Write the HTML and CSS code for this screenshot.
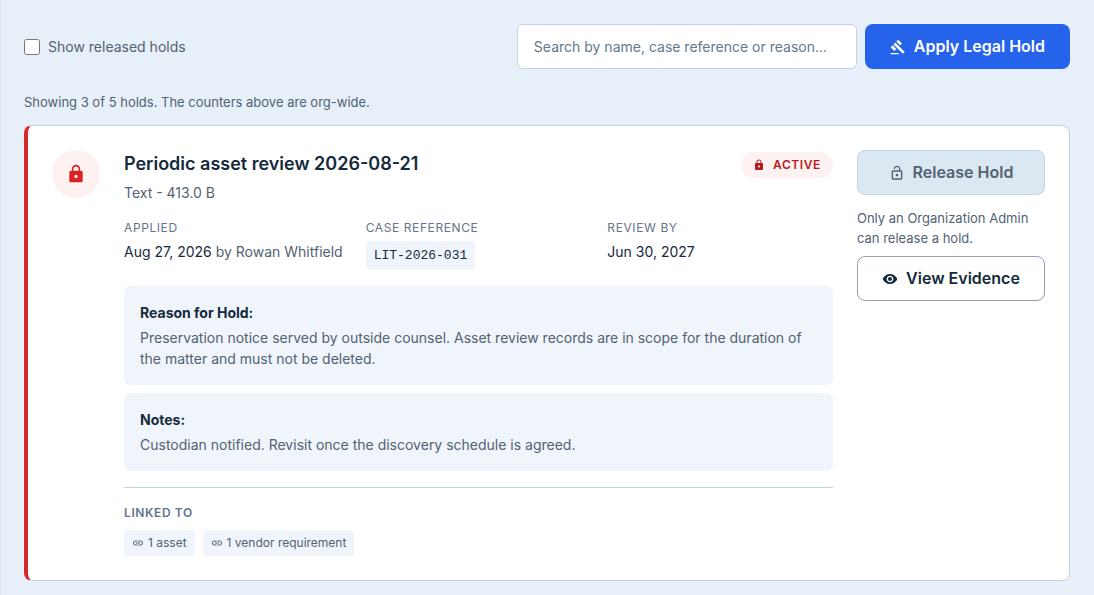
FILE: index.html
```html
<!DOCTYPE html>
<html lang="en">
<head>
<meta charset="utf-8">
<meta name="viewport" content="width=device-width, initial-scale=1">
<title>Legal holds</title>
<link rel="stylesheet" href="styles.css">
</head>
<body>
<svg class="sprite" aria-hidden="true">
  <symbol id="lock" viewBox="0 0 24 24"><path d="M18 8h-1V6c0-2.760-2.240-5-5-5S7 3.240 7 6v2H6c-1.100 0-2 .9-2 2v10c0 1.100.9 2 2 2h12c1.100 0 2-.9 2-2V10c0-1.100-.9-2-2-2zm-6 9c-1.100 0-2-.9-2-2s.9-2 2-2 2 .9 2 2-.9 2-2 2zm3.100-9H8.900V6c0-1.710 1.390-3.100 3.100-3.100s3.100 1.390 3.100 3.100v2z"/></symbol>
  <symbol id="lock-open" viewBox="0 0 24 24"><path d="M18 8h-1V6c0-2.760-2.240-5-5-5S7 3.240 7 6h1.900c0-1.710 1.390-3.100 3.100-3.100s3.100 1.390 3.100 3.100v2H6c-1.100 0-2 .9-2 2v10c0 1.100.9 2 2 2h12c1.100 0 2-.9 2-2V10c0-1.100-.9-2-2-2zm0 12H6V10h12v10zm-6-3c1.100 0 2-.9 2-2s-.9-2-2-2-2 .9-2 2 .9 2 2 2z"/></symbol>
  <symbol id="gavel" viewBox="0 0 24 24"><path d="M1 21h12v2H1zM5.245 8.070l2.830-2.827 14.140 14.142-2.828 2.828zM12.317 1l5.657 5.656-2.830 2.830-5.654-5.660zM3.825 9.485l5.657 5.657-2.828 2.828-5.657-5.657z"/></symbol>
  <symbol id="eye" viewBox="0 0 24 24"><path d="M12 4.500C7 4.500 2.730 7.610 1 12c1.730 4.390 6 7.500 11 7.500s9.270-3.110 11-7.500c-1.730-4.390-6-7.500-11-7.500zM12 17c-2.760 0-5-2.240-5-5s2.240-5 5-5 5 2.240 5 5-2.240 5-5 5zm0-8c-1.660 0-3 1.340-3 3s1.340 3 3 3 3-1.340 3-3-1.340-3-3-3z"/></symbol>
  <symbol id="link" viewBox="0 0 24 24"><path d="M3.900 12c0-1.710 1.390-3.100 3.100-3.100h4V7H7c-2.760 0-5 2.240-5 5s2.240 5 5 5h4v-1.900H7c-1.710 0-3.100-1.390-3.100-3.100zM8 13h8v-2H8v2zm9-6h-4v1.900h4c1.710 0 3.100 1.390 3.100 3.100s-1.390 3.100-3.100 3.100h-4V17h4c2.760 0 5-2.240 5-5s-2.240-5-5-5z"/></symbol>
</svg>
<main class="page">
  <header class="toolbar">
    <label class="toggle"><input type="checkbox" class="toggle-box">Show released holds</label>
    <div class="toolbar-actions">
      <input type="search" class="search" aria-label="Search holds" placeholder="Search by name, case reference or reason...">
      <button type="button" class="button button-primary"><svg class="icon" aria-hidden="true"><use href="#gavel"/></svg>Apply Legal Hold</button>
    </div>
  </header>
  <p class="summary">Showing 3 of 5 holds. The counters above are org-wide.</p>
  <article class="card">
    <div class="avatar"><svg class="icon-large" aria-hidden="true"><use href="#lock"/></svg></div>
    <div class="content">
      <div class="heading">
        <div>
          <h2 class="title">Periodic asset review 2026-08-21</h2>
          <p class="subtitle">Text - 413.0 B</p>
        </div>
        <span class="status"><svg class="icon-small" aria-hidden="true"><use href="#lock"/></svg>ACTIVE</span>
      </div>
      <dl class="facts">
        <div><dt class="term">APPLIED</dt><dd class="value">Aug 27, 2026 <span class="muted">by Rowan Whitfield</span></dd></div>
        <div><dt class="term">CASE REFERENCE</dt><dd class="value"><code class="reference">LIT-2026-031</code></dd></div>
        <div><dt class="term">REVIEW BY</dt><dd class="value">Jun 30, 2027</dd></div>
      </dl>
      <div class="notes">
        <section class="note">
          <h3 class="note-title">Reason for Hold:</h3>
          <p class="note-text">Preservation notice served by outside counsel. Asset review records are in scope for the duration of the matter and must not be deleted.</p>
        </section>
        <section class="note">
          <h3 class="note-title">Notes:</h3>
          <p class="note-text">Custodian notified. Revisit once the discovery schedule is agreed.</p>
        </section>
      </div>
      <section class="linked">
        <h3 class="linked-title">LINKED TO</h3>
        <div class="chips">
          <span class="chip"><svg class="icon-small" aria-hidden="true"><use href="#link"/></svg>1 asset</span>
          <span class="chip"><svg class="icon-small" aria-hidden="true"><use href="#link"/></svg>1 vendor requirement</span>
        </div>
      </section>
    </div>
    <aside class="actions">
      <button type="button" class="button button-disabled" disabled><svg class="icon" aria-hidden="true"><use href="#lock-open"/></svg>Release Hold</button>
      <p class="hint">Only an Organization Admin can release a hold.</p>
      <button type="button" class="button button-outline"><svg class="icon" aria-hidden="true"><use href="#eye"/></svg>View Evidence</button>
    </aside>
  </article>
</main>
</body>
</html>
```
FILE: styles.css
```css
* { box-sizing: border-box; }
body, h2, h3, p, dl, dd { margin: 0; }
body {
  background: #e7eff9;
  color: #152a3d;
  font: 14px/21px Inter, "Liberation Sans", sans-serif;
}
.sprite { display: none; }
svg { fill: currentColor; flex: none; }
.icon { width: 16px; height: 16px; }
.icon-large { width: 20px; height: 20px; }
.icon-small { width: 12px; height: 12px; }

.page { min-height: 100vh; padding: 24px 24px 14px 23px; border-left: 1px solid #dfe8f2; }
.toolbar { display: flex; align-items: center; justify-content: space-between; gap: 16px; }
.toggle { display: flex; align-items: center; gap: 8px; color: #526274; }
.toggle-box { width: 16px; height: 16px; margin: 0; }
.toolbar-actions { display: flex; gap: 8px; }
.search {
  width: 340px;
  padding: 0 16px;
  border: 1px solid #c3d4e5;
  border-radius: 6px;
  background: #fff;
  color: inherit;
  font: inherit;
  appearance: none;
}
.search::placeholder { color: #64788c; }
.button {
  display: flex;
  align-items: center;
  justify-content: center;
  gap: 8px;
  padding: 10px 24px;
  border: 1px solid transparent;
  border-radius: 8px;
  font: 600 16px/23px Inter, "Liberation Sans", sans-serif;
}
.button-primary { background: #2563eb; color: #fff; }
.button-disabled { background: #dbe7f1; border-color: #c3d4e5; color: #526274; }
.button-outline { background: #fff; border-color: #94a0b0; color: #152a3d; }

.summary { margin: 23px 0 13px; color: #526274; font-size: 13px; line-height: 20px; }
.card {
  display: grid;
  grid-template-columns: 48px minmax(0, 1fr) 188px;
  gap: 24px;
  padding: 24px;
  border: 1px solid #c3d4e5;
  border-left: 4px solid #d62828;
  border-radius: 8px;
  background: #fff;
}
.avatar {
  display: grid;
  place-items: center;
  width: 48px;
  height: 48px;
  border-radius: 50%;
  background: #fef1f2;
  color: #dc2222;
}
.heading { display: flex; justify-content: space-between; align-items: flex-start; }
.title { font-size: 18px; line-height: 27px; font-weight: 600; }
.subtitle { margin-top: 5px; color: #526274; }
.status {
  display: flex;
  align-items: center;
  gap: 8px;
  margin-top: 2px;
  padding: 4px 12px;
  border-radius: 16px;
  background: #fef1f2;
  color: #b31c1c;
  font-size: 12px;
  line-height: 18px;
  font-weight: 600;
  letter-spacing: 0.05em;
}
.facts { display: grid; grid-template-columns: repeat(3, minmax(0, 1fr)); gap: 16px; margin-top: 16px; }
.term { color: #64748b; font-size: 12px; line-height: 18px; letter-spacing: 0.05em; }
.value { margin-top: 4px; }
.muted { color: #526274; }
.reference {
  display: block;
  width: fit-content;
  padding: 4px 8px;
  border-radius: 4px;
  background: #f0f5fb;
  font: 13px/21px "Liberation Mono", monospace;
}
.notes { display: grid; gap: 8px; margin-top: 16px; }
.note { padding: 16px; border-radius: 6px; background: #f0f5fb; }
.note-title { font-size: 14px; line-height: 21px; font-weight: 700; }
.note-text { margin-top: 4px; color: #526274; }
.linked { margin-top: 16px; padding-top: 16px; border-top: 1px solid #c3d4e5; }
.linked-title { color: #64748b; font-size: 12px; line-height: 18px; font-weight: 600; letter-spacing: 0.05em; }
.chips { display: flex; gap: 8px; margin-top: 8px; }
.chip {
  display: flex;
  align-items: center;
  gap: 4px;
  padding: 4px 8px;
  border-radius: 4px;
  background: #f0f5fb;
  color: #526274;
  font-size: 12px;
  line-height: 18px;
}
.actions { display: flex; flex-direction: column; gap: 8px; }
.hint { margin-top: 5px; color: #526274; font-size: 13px; line-height: 20px; }
```
